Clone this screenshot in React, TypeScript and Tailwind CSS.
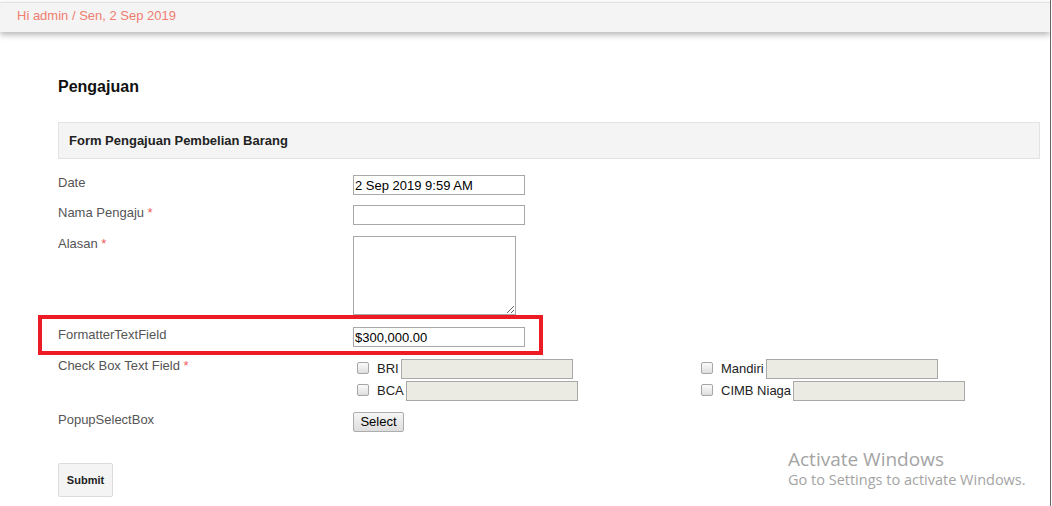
import React from 'react';

const Label = ({ text, required }: { text: string; required?: boolean }) => (
  <div className="w-[295px] shrink-0 text-[13px] leading-[15px] text-[#555]">
    {text}
    {required && <span className="text-[#f05a5a]"> *</span>}
  </div>
);

const Check = ({ label }: { label: string }) => (
  <div className="flex h-[22px] items-start">
    <span className="ml-[4px] mt-[3px] h-[12px] w-[12px] shrink-0 rounded-[2px] border border-[#a6a6a6] bg-gradient-to-b from-[#fbfbfb] to-[#dedede]" />
    <span className="ml-[8px] mt-[2px] text-[13px] leading-[16px] text-[#222]">{label}</span>
    <span className="ml-[2px] h-[20px] w-[172px] border border-[#a9a9a9] bg-[#ebebe4]" />
  </div>
);

const App = () => {
  return (
    <div className="relative h-[506px] w-[1051px] overflow-hidden border-r border-[#666] bg-white font-['Liberation_Sans',Arial,sans-serif]">
      {/* top bar */}
      <div className="mt-[2px] h-[30px] border-t border-[#e2e2e2] bg-[#f4f4f4] pl-[17px] pt-[5px] text-[13px] leading-[15px] text-[#ef7d70] shadow-[0_3px_6px_rgba(0,0,0,0.28)]">
        Hi admin / Sen, 2 Sep 2019
      </div>

      <div className="pl-[58px] pr-[10px]">
        <h1 className="mt-[46px] text-[16px] font-bold leading-[18px] text-[#111]">Pengajuan</h1>

        <div className="mt-[26px] flex h-[37px] items-center border border-[#e3e3e3] bg-[#f4f4f4] pl-[10px]">
          <span className="text-[13px] font-bold text-[#222]">Form Pengajuan Pembelian Barang</span>
        </div>

        <div className="mt-[16px] flex items-start">
          <Label text="Date" />
          <input
            readOnly
            value="2 Sep 2019 9:59 AM"
            className="h-[20px] w-[172px] border border-[#a9a9a9] px-[1px] text-[13px] text-black outline-none"
          />
        </div>

        <div className="mt-[10px] flex items-start">
          <Label text="Nama Pengaju" required />
          <input className="h-[20px] w-[172px] border border-[#a9a9a9] px-[1px] text-[13px] outline-none" />
        </div>

        <div className="mt-[11px] flex items-start">
          <Label text="Alasan" required />
          <textarea className="block h-[79px] w-[163px] resize border border-[#a9a9a9] text-[13px] outline-none" />
        </div>

        <div className="mt-[12px] flex items-start">
          <Label text="FormatterTextField" />
          <input
            readOnly
            value="$300,000.00"
            className="h-[20px] w-[172px] border border-[#a9a9a9] px-[1px] text-[13px] text-black outline-none"
          />
        </div>

        <div className="mt-[11px] flex items-start">
          <Label text="Check Box Text Field" required />
          <div className="flex pt-[1px]">
            <div className="w-[344px]">
              <Check label="BRI" />
              <Check label="BCA" />
            </div>
            <div className="w-[344px]">
              <Check label="Mandiri" />
              <Check label="CIMB Niaga" />
            </div>
          </div>
        </div>

        <div className="mt-[9px] flex items-start">
          <Label text="PopupSelectBox" />
          <button className="h-[20px] w-[51px] rounded-[2px] border border-[#adadad] bg-gradient-to-b from-[#f6f6f6] to-[#dddddd] text-[13px] leading-[16px] text-black">
            Select
          </button>
        </div>

        <button className="mt-[31px] h-[34px] w-[55px] rounded-[2px] border border-[#dcdcdc] bg-[#f4f4f4] text-[11px] font-bold text-[#222]">
          Submit
        </button>
      </div>

      {/* annotation */}
      <div className="absolute left-[38px] top-[315px] h-[40px] w-[505px] border-4 border-[#ed1c24]" />

      {/* windows watermark */}
      <div className="absolute left-[788px] top-[447px] font-['Open_Sans',sans-serif] text-[#a4a4a4]">
        <div className="text-[19px] leading-[24px]">Activate Windows</div>
        <div className="text-[14.5px] leading-[18px]">Go to Settings to activate Windows.</div>
      </div>
    </div>
  );
};

export default App;
